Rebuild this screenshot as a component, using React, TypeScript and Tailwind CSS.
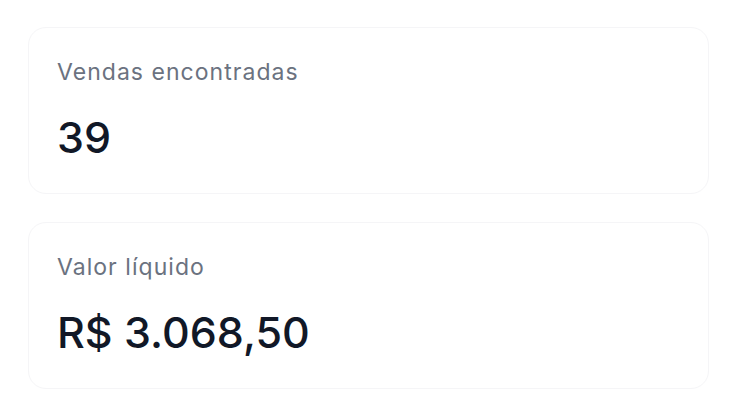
const cards = [
  { label: 'Vendas encontradas', value: '39' },
  { label: 'Valor líquido', value: 'R$ 3.068,50' },
];

export default function App() {
  return (
    <div className="min-h-screen bg-white px-7 pt-[27px] font-['Inter',sans-serif]">
      <div className="flex flex-col gap-7">
        {cards.map(({ label, value }) => (
          <div
            key={label}
            className="w-[681px] rounded-[18px] border border-[#f5f5f7] bg-white px-7 pt-[30px] pb-[34px]"
          >
            <p className="text-[23px] leading-7 tracking-[0.045em] text-[#6b7280]">{label}</p>
            <p className="mt-[29px] text-[43px] leading-[44px] font-medium text-[#111827]">{value}</p>
          </div>
        ))}
      </div>
    </div>
  );
}
